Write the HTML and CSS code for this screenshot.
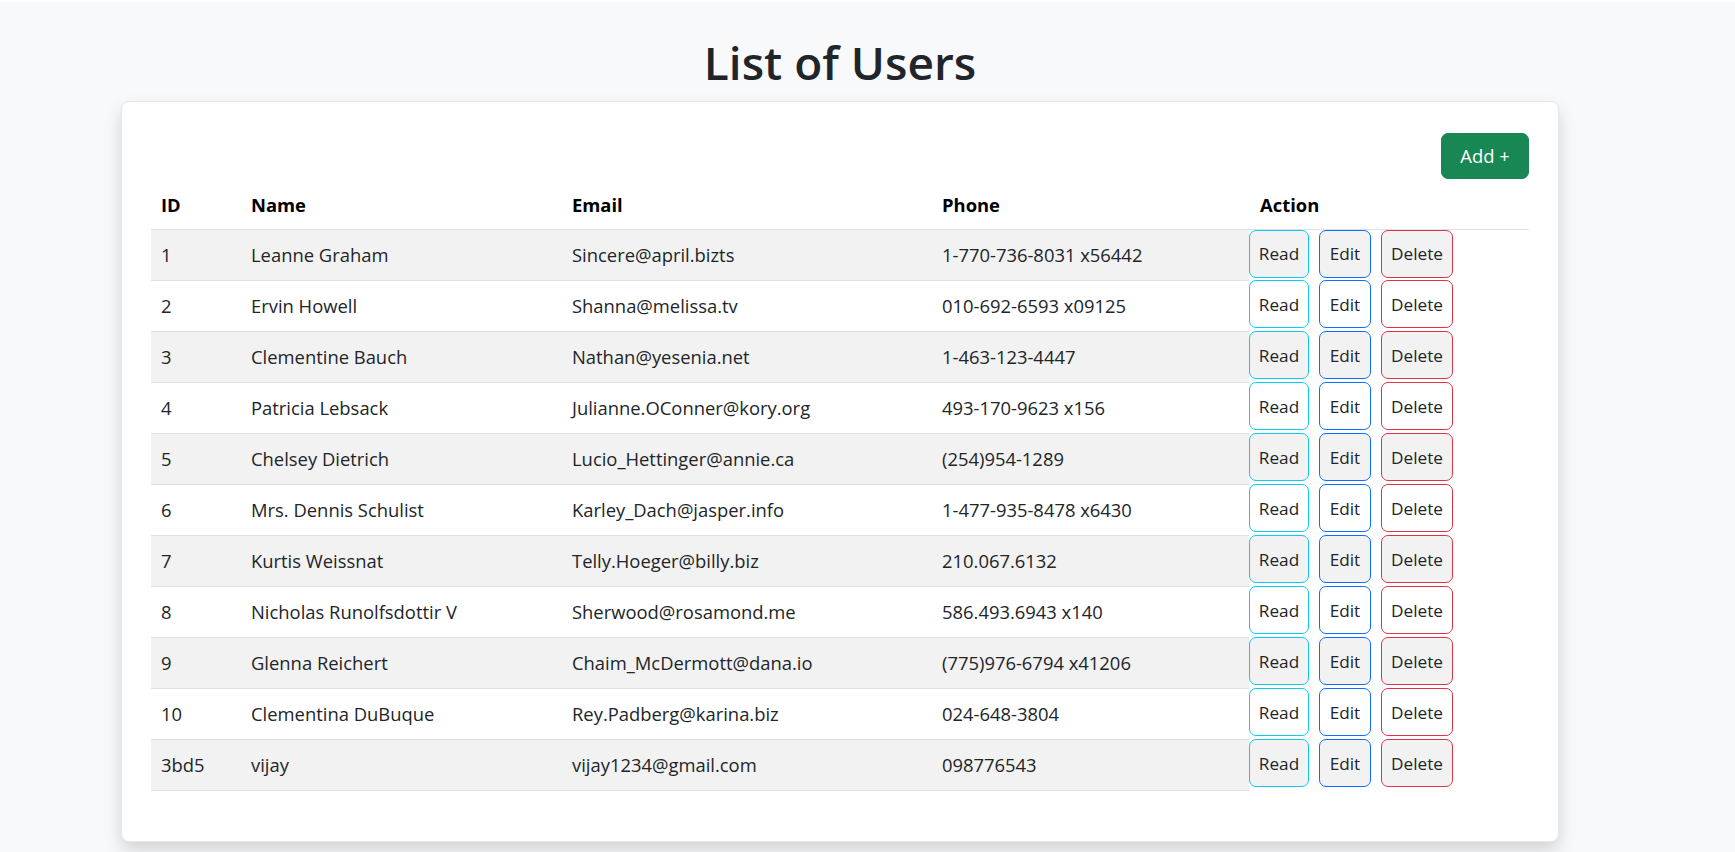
FILE: index.html
```html
<!DOCTYPE html>
<html lang="en">
<head>
<meta charset="utf-8">
<title>List of Users</title>
<link rel="stylesheet" href="styles.css">
</head>
<body>
<div class="topbar"></div>
<div class="page">
  <h1 class="title">List of Users</h1>
  <div class="card">
    <div class="toolbar">
      <button class="btn-add">Add +</button>
    </div>
    <table class="users">
      <colgroup>
        <col class="c-id"><col class="c-name"><col class="c-email"><col class="c-phone"><col class="c-action">
      </colgroup>
      <thead>
        <tr><th>ID</th><th>Name</th><th>Email</th><th>Phone</th><th class="th-action">Action</th></tr>
      </thead>
      <tbody>
        <tr><td>1</td><td>Leanne Graham</td><td>Sincere@april.bizts</td><td>1-770-736-8031 x56442</td><td class="actions"><div class="btns"><button class="b b-read">Read</button><button class="b b-edit">Edit</button><button class="b b-del">Delete</button></div></td></tr>
        <tr><td>2</td><td>Ervin Howell</td><td>Shanna@melissa.tv</td><td>010-692-6593 x09125</td><td class="actions"><div class="btns"><button class="b b-read">Read</button><button class="b b-edit">Edit</button><button class="b b-del">Delete</button></div></td></tr>
        <tr><td>3</td><td>Clementine Bauch</td><td>Nathan@yesenia.net</td><td>1-463-123-4447</td><td class="actions"><div class="btns"><button class="b b-read">Read</button><button class="b b-edit">Edit</button><button class="b b-del">Delete</button></div></td></tr>
        <tr><td>4</td><td>Patricia Lebsack</td><td>Julianne.OConner@kory.org</td><td>493-170-9623 x156</td><td class="actions"><div class="btns"><button class="b b-read">Read</button><button class="b b-edit">Edit</button><button class="b b-del">Delete</button></div></td></tr>
        <tr><td>5</td><td>Chelsey Dietrich</td><td>Lucio_Hettinger@annie.ca</td><td>(254)954-1289</td><td class="actions"><div class="btns"><button class="b b-read">Read</button><button class="b b-edit">Edit</button><button class="b b-del">Delete</button></div></td></tr>
        <tr><td>6</td><td>Mrs. Dennis Schulist</td><td>Karley_Dach@jasper.info</td><td>1-477-935-8478 x6430</td><td class="actions"><div class="btns"><button class="b b-read">Read</button><button class="b b-edit">Edit</button><button class="b b-del">Delete</button></div></td></tr>
        <tr><td>7</td><td>Kurtis Weissnat</td><td>Telly.Hoeger@billy.biz</td><td>210.067.6132</td><td class="actions"><div class="btns"><button class="b b-read">Read</button><button class="b b-edit">Edit</button><button class="b b-del">Delete</button></div></td></tr>
        <tr><td>8</td><td>Nicholas Runolfsdottir V</td><td>Sherwood@rosamond.me</td><td>586.493.6943 x140</td><td class="actions"><div class="btns"><button class="b b-read">Read</button><button class="b b-edit">Edit</button><button class="b b-del">Delete</button></div></td></tr>
        <tr><td>9</td><td>Glenna Reichert</td><td>Chaim_McDermott@dana.io</td><td>(775)976-6794 x41206</td><td class="actions"><div class="btns"><button class="b b-read">Read</button><button class="b b-edit">Edit</button><button class="b b-del">Delete</button></div></td></tr>
        <tr><td>10</td><td>Clementina DuBuque</td><td>Rey.Padberg@karina.biz</td><td>024-648-3804</td><td class="actions"><div class="btns"><button class="b b-read">Read</button><button class="b b-edit">Edit</button><button class="b b-del">Delete</button></div></td></tr>
        <tr><td>3bd5</td><td>vijay</td><td>vijay1234@gmail.com</td><td>098776543</td><td class="actions"><div class="btns"><button class="b b-read">Read</button><button class="b b-edit">Edit</button><button class="b b-del">Delete</button></div></td></tr>
      </tbody>
    </table>
  </div>
</div>
</body>
</html>
```
FILE: styles.css
```css
* { box-sizing: border-box; }
html, body { margin: 0; padding: 0; }
body {
  background: #f8f9fa;
  font-family: "Open Sans", "Noto Sans", sans-serif;
  color: #212529;
  font-size: 18.4px;
  line-height: 1.5;
  height: 852px;
  overflow: hidden;
}
.topbar { height: 2px; background: #ffffff; }
.page { width: 1680px; padding-top: 32px; }
.title {
  margin: 0 0 9px;
  text-align: center;
  font-size: 46px;
  line-height: 57.6px;
  font-weight: 600;
  color: #212529;
}
.card {
  width: 1438px;
  margin: 0 auto;
  background: #fff;
  border: 1px solid rgba(0,0,0,0.09);
  border-radius: 8px;
  box-shadow: 0 8.8px 17.6px rgba(0,0,0,0.15);
  padding: 31px 29px 50px;
}
.toolbar { display: flex; justify-content: flex-end; }
.btn-add {
  height: 46px;
  padding: 0 14px;
  min-width: 88px;
  border: 1px solid #198754;
  background: #198754;
  color: #fff;
  font-family: inherit;
  font-size: 18.4px;
  border-radius: 7px;
}
.users {
  width: 1378px;
  table-layout: fixed;
  border-collapse: collapse;
}
.c-id { width: 90px; }
.c-name { width: 321px; }
.c-email { width: 370px; }
.c-phone { width: 317px; }
.c-action { width: 280px; }
.users th {
  text-align: left;
  font-weight: 700;
  color: #000;
  padding: 13px 10px 11px;
  line-height: 26px;
  border-bottom: 1px solid #dee2e6;
}
.users th.th-action { padding-left: 11px; }
.users td {
  padding: 0 10px;
  height: 51px;
  vertical-align: middle;
  line-height: 26px;
  border-bottom: 1px solid #dee2e6;
  white-space: nowrap;
}
.users tbody tr:nth-child(odd) td { background: #f2f2f2; }
.users td.actions {
  padding: 0;
  vertical-align: top;
  border-bottom: none;
  background: transparent !important;
}
.btns { display: flex; gap: 10px; }
.b {
  height: 48px;
  padding: 0 8px;
  background: #fff;
  border: 1px solid;
  border-radius: 7px;
  font-family: inherit;
  font-size: 17.2px;
  color: #212529;
}
.users tbody tr:nth-child(odd) .b { background: #f2f2f2; }
.b-read { border-color: #0dcaf0; width: 60px; }
.b-edit { border-color: #0d6efd; width: 52px; }
.b-del { border-color: #dc3545; width: 72px; }
```
